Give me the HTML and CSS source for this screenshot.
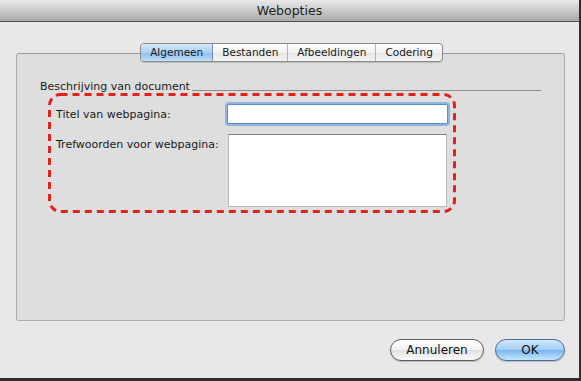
FILE: index.html
```html
<!DOCTYPE html>
<html>
<head>
  <title>Webopties</title>
  <link rel="stylesheet" href="styles.css">
</head>
<body>
  <div class="window">
    <div class="titlebar">Webopties</div>
    <div class="content">
      <div class="tabs">
        <div class="tab tab-selected">Algemeen</div>
        <div class="tab">Bestanden</div>
        <div class="tab">Afbeeldingen</div>
        <div class="tab">Codering</div>
      </div>
      <div class="panel">
        <div class="group-header">
          <span class="group-title">Beschrijving van document</span>
          <span class="group-line"></span>
        </div>
        <div class="fields">
          <svg class="marker" width="410" height="122" viewBox="0 0 410 122">
            <rect x="1.5" y="1.5" width="405" height="117" rx="11" ry="11" fill="none" stroke="#e3211d" stroke-width="3" stroke-dasharray="7 5"/>
          </svg>
          <label class="field-label" for="titel">Titel van webpagina:</label>
          <input class="text-input" id="titel" type="text">
          <label class="field-label label-top" for="trefwoorden">Trefwoorden voor webpagina:</label>
          <textarea class="text-area" id="trefwoorden"></textarea>
        </div>
      </div>
      <div class="footer">
        <button class="btn">Annuleren</button>
        <button class="btn btn-default">OK</button>
      </div>
    </div>
  </div>
</body>
</html>
```

FILE: styles.css
```css
body {
  margin: 0;
  background-color: #2e2e2e;
  font-family: "DejaVu Sans", sans-serif;
  color: #1a1a1a;
}

.window {
  width: 579px;
  height: 378px;
  background-color: #e8e8e8;
  display: flex;
  flex-direction: column;
}

.titlebar {
  height: 21px;
  line-height: 22px;
  text-align: center;
  font-size: 12.5px;
  color: #202020;
  background: linear-gradient(#e9e9e9, #c4c4c4 60%, #a8a8a8);
  border-bottom: 1px solid #515151;
}

.content {
  flex: 1;
  display: flex;
  flex-direction: column;
  padding: 21px 14px 0 16px;
}

.tabs {
  display: flex;
  justify-content: center;
  align-self: center;
  margin-left: 2px;
  height: 17px;
  margin-bottom: -9px;
  border: 1px solid #8b8b8b;
  border-radius: 4px;
  background: linear-gradient(#ffffff, #f1f1f1 50%, #e6e6e6 51%, #f4f4f4);
  position: relative;
  overflow: hidden;
  box-shadow: 0 1px 1px rgba(0, 0, 0, 0.15);
}

.tab {
  font-size: 10.5px;
  line-height: 17px;
  padding: 0 9px;
  border-left: 1px solid #b5b5b5;
}

.tab:first-child {
  border-left: none;
}

.tab-selected {
  background: linear-gradient(#d5e8fa, #a9d0f5 50%, #8cbdec 51%, #bfe0fb);
  border-right: 1px solid #6f8fb4;
}

.tab-selected + .tab {
  border-left: none;
}

.panel {
  height: 240px;
  background-color: #dedede;
  border: 1px solid #adadad;
  border-top-color: #9c9c9c;
  border-radius: 3px;
  padding: 26px 23px 0 23px;
}

.group-header {
  display: flex;
  align-items: flex-end;
  font-size: 11px;
}

.group-title {
  padding-right: 2px;
}

.group-line {
  flex: 1;
  border-bottom: 1px solid #8f8f8f;
  margin-bottom: 2px;
}

.fields {
  position: relative;
  width: 389px;
  height: 98px;
  margin: 1px 0 0 9px;
  padding: 10px 12px 11px 7px;
  display: grid;
  grid-template-columns: 171px 221px;
  grid-template-rows: 20px 73px;
  row-gap: 10px;
  align-items: center;
}

.marker {
  position: absolute;
  left: -1px;
  top: -1px;
}

.field-label {
  font-size: 11px;
}

.label-top {
  align-self: start;
  padding-top: 4px;
}

.text-input {
  box-sizing: border-box;
  width: 221px;
  height: 20px;
  margin: 0;
  border: 1px solid #5f8dc2;
  border-radius: 2px;
  box-shadow: 0 0 0 2px #8fb4e0;
  background: #ffffff;
}

.text-area {
  box-sizing: border-box;
  width: 219px;
  height: 73px;
  margin: 0 0 0 1px;
  border: 1px solid #b9b9b9;
  border-top-color: #808080;
  background: #ffffff;
  resize: none;
}

.footer {
  display: flex;
  justify-content: flex-end;
  gap: 11px;
  margin-top: 18px;
}

.btn {
  font-family: "DejaVu Sans", sans-serif;
  font-size: 12px;
  color: #111111;
  height: 22px;
  padding: 0;
  width: 94px;
  border: 1px solid #5e5e5e;
  border-radius: 11px;
  background: linear-gradient(#ffffff, #f2f2f2 50%, #e0e0e0 51%, #fafafa);
  box-shadow: 0 1px 1px rgba(0, 0, 0, 0.2);
}

.btn-default {
  width: 70px;
  border-color: #4a6e9a;
  background: linear-gradient(#d4e9fb, #9fccf3 50%, #78b6ee 51%, #c4e5fd);
}
```
